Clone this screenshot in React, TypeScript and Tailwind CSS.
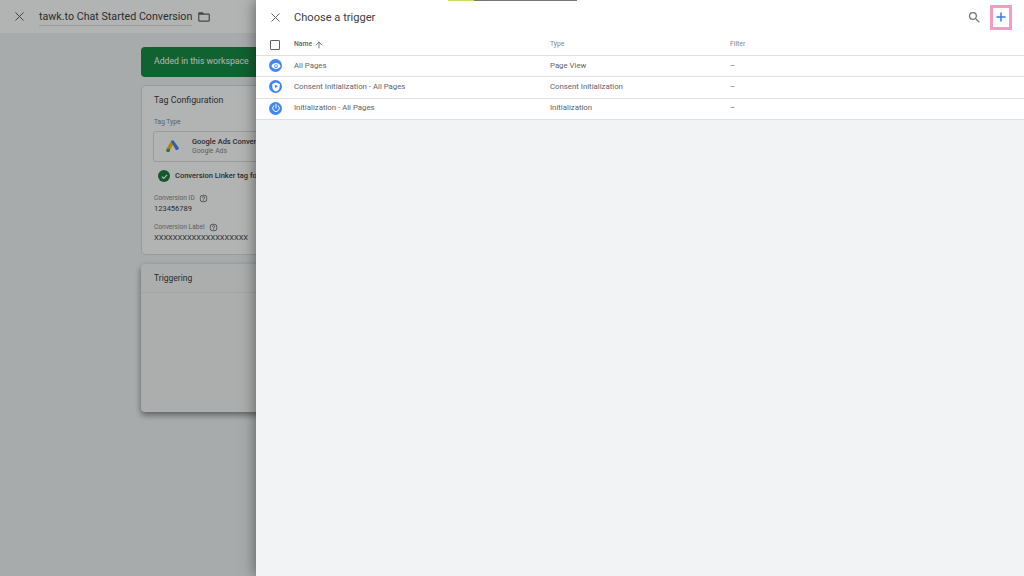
import { ArrowUp, Plus, X } from 'lucide-react';
import type { ReactNode } from 'react';

const font = { fontFamily: 'Roboto, sans-serif' };

function EyeGlyph() {
  return (
    <svg viewBox="0 0 24 24" className="w-[10px] h-[10px]" fill="#fff">
      <path d="M12 5C7 5 2.700 8.100 1 12c1.700 3.900 6 7 11 7s9.300-3.100 11-7c-1.700-3.900-6-7-11-7zm0 11.500a4.500 4.500 0 1 1 0-9 4.500 4.500 0 0 1 0 9zm0-7a2.500 2.500 0 1 0 0 5 2.500 2.500 0 0 0 0-5z" />
    </svg>
  );
}

function ShieldGlyph() {
  return (
    <svg viewBox="0 0 24 24" className="w-[10px] h-[10px]" fill="#fff">
      <path d="M12 1 3 5v6c0 5.500 3.800 10.700 9 12 5.200-1.300 9-6.500 9-12V5l-9-4zm-1 6 3 1 2 3-3 1-1 3-2-2-1-4 2-2z" />
    </svg>
  );
}

function PowerGlyph() {
  return (
    <svg viewBox="0 0 24 24" className="w-[10px] h-[10px]" fill="none" stroke="#fff" strokeWidth="2.400" strokeLinecap="round">
      <path d="M12 3v9" />
      <path d="M17.500 6.500a8 8 0 1 1-11 0" />
    </svg>
  );
}

function AdsLogo() {
  return (
    <svg viewBox="0 0 24 24" className="w-[15px] h-[15px]">
      <path d="M9.500 3.500 2.300 16l5 2.900L14.500 6.400z" fill="#fbbc04" />
      <path d="M14.500 3.500a2.900 2.900 0 0 0-5 0l-.1.100 7.300 12.700 0 0a2.900 2.900 0 0 0 5-2.900z" fill="#4285f4" />
      <circle cx="5" cy="18" r="3" fill="#34a853" />
    </svg>
  );
}

function FolderOutline() {
  return (
    <svg viewBox="0 0 24 24" className="ml-[5px] w-[14px] h-[14px] shrink-0" fill="#5f6368">
      <path d="M20 6h-8l-2-2H4c-1.100 0-2 .9-2 2v12c0 1.100.9 2 2 2h16c1.100 0 2-.9 2-2V8c0-1.100-.9-2-2-2zm0 12H4V8h16v10z" />
    </svg>
  );
}

function SearchGlyph() {
  return (
    <svg viewBox="0 0 24 24" className="ml-auto w-[15px] h-[15px]" fill="#757575">
      <path d="M15.500 14h-.79l-.28-.27A6.471 6.471 0 0 0 16 9.500 6.500 6.500 0 1 0 9.500 16c1.610 0 3.090-.59 4.230-1.570l.27.28v.79l5 4.990L20.490 19l-4.990-5zm-6 0C7.010 14 5 11.990 5 9.500S7.010 5 9.500 5 14 7.010 14 9.500 11.990 14 9.500 14z" />
    </svg>
  );
}

function HelpGlyph() {
  return (
    <svg viewBox="0 0 24 24" className="w-[9px] h-[9px]" fill="#5f6368">
      <path d="M11 18h2v-2h-2v2zm1-16a10 10 0 1 0 0 20 10 10 0 0 0 0-20zm0 18a8 8 0 1 1 0-16 8 8 0 0 1 0 16zm0-14a4 4 0 0 0-4 4h2a2 2 0 1 1 4 0c0 2-3 1.750-3 5h2c0-2.250 3-2.500 3-5a4 4 0 0 0-4-4z" />
    </svg>
  );
}

type Trigger = { name: string; type: string; icon: ReactNode };

const triggers: Trigger[] = [
  { name: 'All Pages', type: 'Page View', icon: <EyeGlyph /> },
  { name: 'Consent Initialization - All Pages', type: 'Consent Initialization', icon: <ShieldGlyph /> },
  { name: 'Initialization - All Pages', type: 'Initialization', icon: <PowerGlyph /> },
];

function Field({ label, value }: { label: string; value: string }) {
  return (
    <div className="mt-[8px]">
      <div className="flex items-center gap-[4px] h-[9px] text-[6.600px] text-[#80868b]">
        {label}
        <HelpGlyph />
      </div>
      <div className="h-[12px] text-[7.500px] leading-[12px] text-[#3c4043]">{value}</div>
    </div>
  );
}

export default function App() {
  return (
    <div className="flex w-[1024px] h-[576px] overflow-hidden bg-[#f1f3f4]" style={font}>
      {/* Tag editor, dimmed behind the drawer */}
      <div className="relative w-[256px] shrink-0 overflow-hidden">
        <div className="flex items-center h-[33px] bg-white">
          <X className="ml-[12px] w-[15px] h-[15px] text-[#5f6368] shrink-0" strokeWidth={1.6} />
          <div className="ml-[12px] mt-[1px] shrink-0 border-b border-[#dadce0] text-[10.700px] leading-[17px] text-[#3c4043] whitespace-nowrap">
            tawk.to Chat Started Conversion
          </div>
          <FolderOutline />
        </div>

        <div className="w-[600px] ml-[141px] mt-[14px]">
          <div className="flex items-center h-[30px] pl-[13px] rounded-[4px] bg-[#188a42] text-[8.700px] text-white">
            Added in this workspace
          </div>

          <div className="h-[170px] mt-[8px] pl-[12px] pt-[9px] rounded-[4px] bg-white border border-[#dadce0]">
            <div className="text-[8.800px] leading-[10px] text-[#3c4043]">Tag Configuration</div>
            <div className="mt-[13px] text-[6.600px] leading-[9px] text-[#80868b]">Tag Type</div>
            <div className="flex items-center w-[400px] h-[31px] mt-[4px] -ml-[1px] rounded-[3px] border border-[#dadce0]">
              <div className="ml-[11px]">
                <AdsLogo />
              </div>
              <div className="ml-[12px]">
                <div className="text-[7.500px] leading-[10px] font-medium text-[#3c4043] whitespace-nowrap">Google Ads Conversion Tracking</div>
                <div className="text-[6.800px] leading-[9px] text-[#80868b]">Google Ads</div>
              </div>
            </div>
            <div className="flex items-center h-[14px] mt-[7px] mb-[11px] ml-[4px]">
              <span className="flex items-center justify-center w-[12px] h-[12px] rounded-full bg-[#188038]">
                <svg viewBox="0 0 12 12" className="w-[9px] h-[9px]" fill="none" stroke="#fff" strokeWidth="1.600">
                  <path d="m2.500 6.200 2.400 2.400 4.600-4.800" />
                </svg>
              </span>
              <span className="ml-[5px] text-[7.500px] font-medium text-[#3c4043] whitespace-nowrap">
                Conversion Linker tag found in container
              </span>
            </div>
            <Field label="Conversion ID" value="123456789" />
            <Field label="Conversion Label" value="XXXXXXXXXXXXXXXXXXXX" />
          </div>

          <div className="h-[148px] mt-[9px] rounded-[4px] bg-[#f6f6f6] shadow-[0_3px_6px_rgba(0,0,0,0.45)]">
            <div className="flex items-center h-[29px] pl-[13px] border-b border-[#e8e8e8] text-[8.500px] text-[#3c4043]">
              Triggering
            </div>
          </div>
        </div>

        <div className="absolute inset-0 bg-[#000805]/30" />
      </div>

      {/* Choose a trigger drawer */}
      <div className="relative flex-1 flex flex-col shadow-[0_0_14px_rgba(0,0,0,0.5)]">
        <div className="absolute top-0 left-[192px] flex h-px">
          <div className="w-[26px] bg-[#cddc5a]" />
          <div className="w-[103px] bg-[#777777]" />
        </div>

        <div className="flex items-center h-[34px] bg-white">
          <X className="ml-[12px] w-[15px] h-[15px] text-[#5f6368] shrink-0" strokeWidth={1.6} />
          <div className="ml-[11px] mt-[2px] text-[11.100px] text-[#3c4043]">Choose a trigger</div>
          <SearchGlyph />
          <div className="flex items-center justify-center w-[22px] h-[25px] ml-[8px] mr-[12px] border-[3px] border-[#f59ac0]">
            <Plus className="w-[14px] h-[14px] text-[#2f80f0]" strokeWidth={2.600} />
          </div>
        </div>

        <div className="flex items-center h-[22px] bg-white border-b border-[#e0e0e0] text-[6.800px]">
          <div className="w-[38px] pl-[14px]">
            <div className="w-[10px] h-[10px] rounded-[1px] border border-[#5f6368]" />
          </div>
          <div className="flex items-center gap-[2px] w-[256px] font-medium text-[#5f6368]">
            Name
            <ArrowUp className="w-[10px] h-[10px]" strokeWidth={2} />
          </div>
          <div className="w-[180px] text-[#80868b]">Type</div>
          <div className="text-[#80868b]">Filter</div>
        </div>

        {triggers.map((t) => (
          <div key={t.name} className="flex items-center h-[21.300px] pb-[1px] bg-white border-b border-[#e0e0e0] text-[7.800px] text-[#5f6368]">
            <div className="w-[38px] pl-[13px]">
              <div className="flex items-center justify-center w-[13px] h-[13px] rounded-full bg-[#4285f4]">{t.icon}</div>
            </div>
            <div className="w-[256px]">{t.name}</div>
            <div className="w-[180px]">{t.type}</div>
            <div>–</div>
          </div>
        ))}
      </div>
    </div>
  );
}
